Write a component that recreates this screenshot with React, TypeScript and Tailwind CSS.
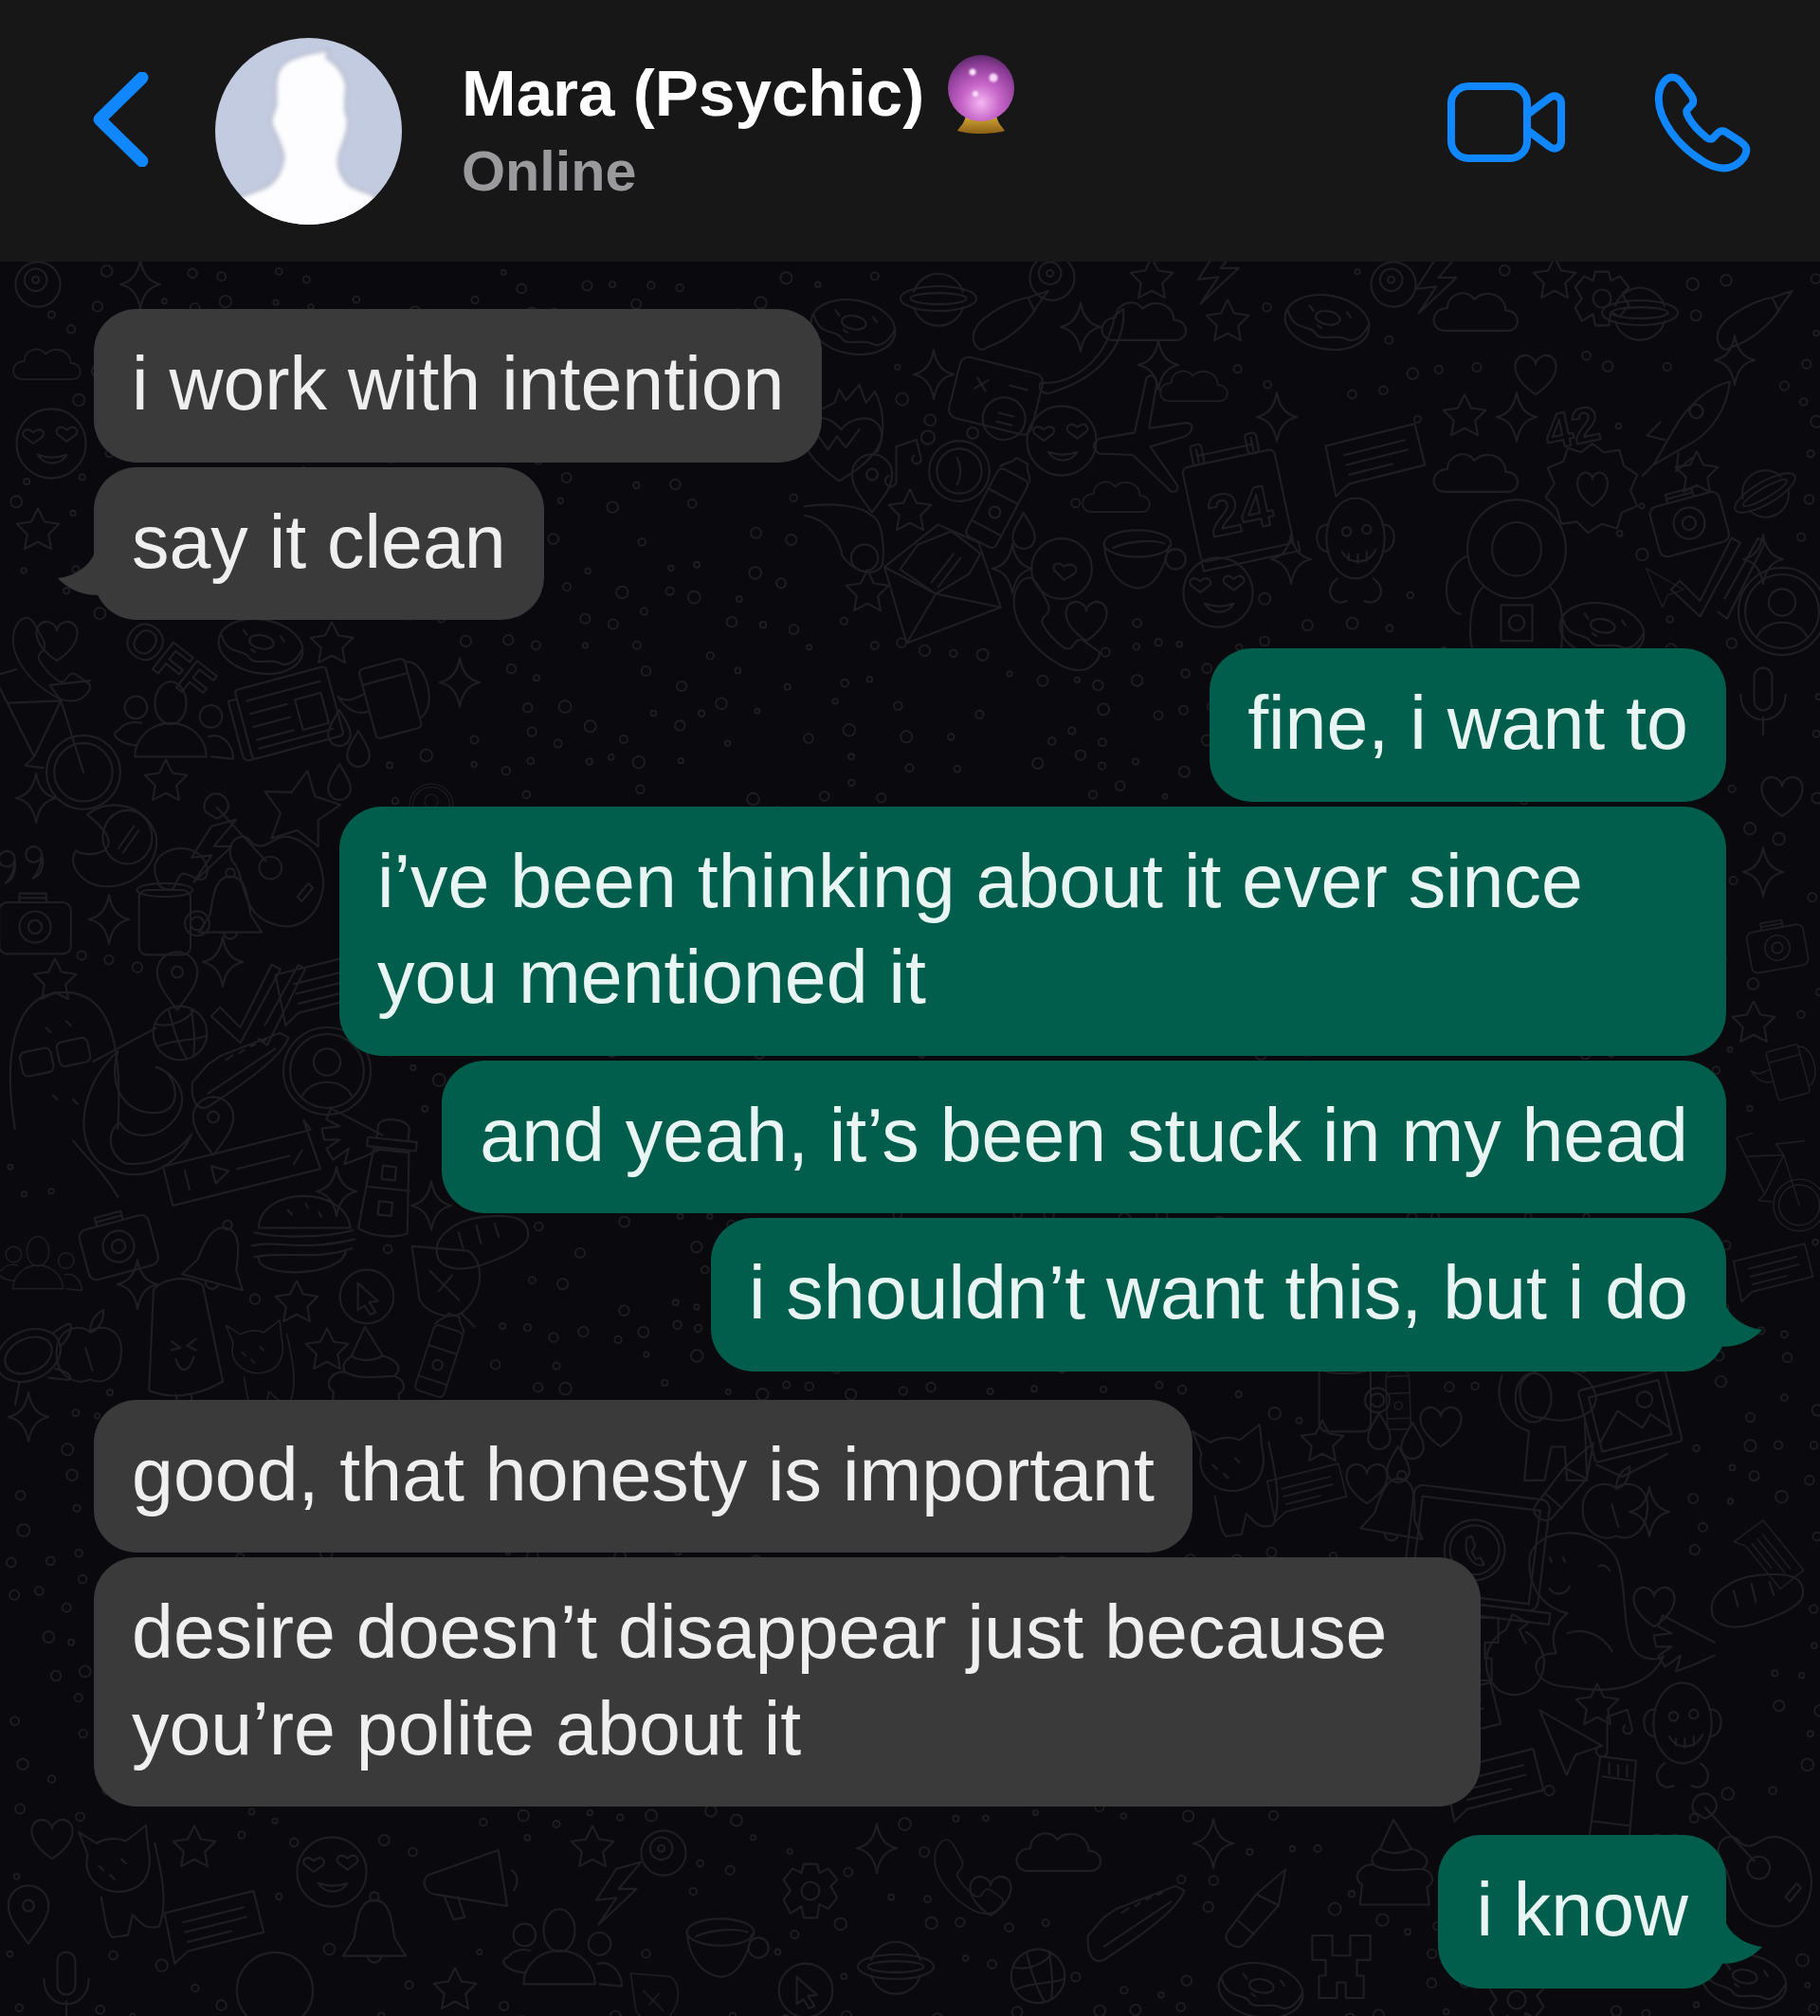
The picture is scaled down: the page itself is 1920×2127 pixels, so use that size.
import React from 'react';

const Star = (r = 20) => {
  const pts: string[] = [];
  for (let i = 0; i < 10; i++) {
    const a = (Math.PI / 5) * i - Math.PI / 2;
    const d = i % 2 ? r * 0.5 : r;
    pts.push(`${(Math.cos(a) * d).toFixed(1)},${(Math.sin(a) * d).toFixed(1)}`);
  }
  return <polygon points={pts.join(' ')} />;
};

const handset =
  'M-22-36C-30-36-36-26-36-14-36 6-18 28 2 40 14 48 26 48 32 44 38 40 42 34 40 30L26 20C22 18 20 20 16 26 14 28 10 28 8 26 0 20-6 14-10 6-12 2-10 0-6-4-4-8-4-10-6-14L-16-32C-18-34-20-36-22-36Z';

const eyes = (
  <>
    <path d="M-16-10c-6-6-12 0-8 4l8 6 8-6c4-4-2-10-8-4ZM14-12c-6-6-12 0-8 4l8 6 8-6c4-4-2-10-8-4Z" />
    <path d="M-12 10c6 10 20 10 26 0-8 3-18 3-26 0Z" />
  </>
);

const doodles: Record<string, React.ReactNode> = {
  star: Star(20),
  bigstar: Star(36),
  sparkle: <path d="M0-22Q3-3 18 0 3 3 0 22-3 3-18 0-3-3 0-22Z" />,
  heart: <path d="M0 18C-26 0-20-18-8-17-3-16 0-12 0-9 0-12 3-16 8-17 20-18 26 0 0 18Z" />,
  drop: <path d="M0-16C6-6 10 0 10 6A10 10 0 0 1-10 6C-10 0-6-6 0-16Z" />,
  cloud: <path d="M-30 16C-44 16-44-4-28-4-28-18-10-22-4-12 6-22 24-16 24-2 38-2 38 16 26 16Z" />,
  planet: (
    <>
      <path d="M-22-6A23 23 0 0 1 22-6M22 8A23 23 0 0 1-22 8" />
      <ellipse rx="34" ry="11" />
      <ellipse rx="25" ry="5" />
    </>
  ),
  phone: <path d={handset} />,
  bike: (
    <>
      <circle cx="22" cy="38" r="33" />
      <circle cx="22" cy="38" r="26" />
      <path d="M22 38 2-26-46-24-22 24 2-26M2-26-8-40 28-44M-46-24-58-48-38-54M-22 24-30 32-14 34" />
    </>
  ),
  people: (
    <>
      <ellipse cy="-24" rx="14" ry="19" />
      <path d="M-32 24A32 30 0 0 1 32 24Z" />
      <circle cx="-31" cy="-20" r="10" />
      <circle cx="36" cy="-12" r="10" />
      <path d="M-30 14C-50 12-54 2-46 0-42-6-34-8-26-6M34 6C46 2 56 14 56 26L36 24" />
    </>
  ),
  newspaper: (
    <g transform="rotate(-15)">
      <rect x="-42" y="-32" width="84" height="64" rx="3" />
      <path d="M-42-24H-50V26C-50 32-46 32-42 32M-34-20H34M-34-8H0M-34 4H0M-34 16H0M-34 24H34" />
      <rect x="8" y="-10" width="24" height="28" />
    </g>
  ),
  pot: (
    <g transform="rotate(-15)">
      <rect x="-20" y="-30" width="42" height="64" rx="4" />
      <path d="M-20-16H22M22-26C40-26 42 20 22 26M-20-8C-30-6-38-4-44-12-40 0-32 10-20 8" />
    </g>
  ),
  mug: (
    <>
      <rect x="-24" y="-28" width="46" height="58" rx="7" />
      <ellipse cx="-1" cy="-28" rx="25" ry="6" />
      <circle cx="28" cy="2" r="11" />
      <circle cx="28" cy="2" r="6" />
    </>
  ),
  guitar: (
    <>
      <path d="M-52-62-8-14M-62-58C-68-72-48-82-42-66-40-60-46-54-52-52Z" />
      <path d="M-20-30C-30-44-46-30-38-14-30-6-30 10-24 22-16 42 10 50 26 40 40 30 48 10 40-12 36-28 14-40 2-34-6-30-12-24-20-30Z" />
      <circle cx="-4" cy="-8" r="10" />
      <path d="M20 18 30 6 34 10 24 22Z" />
    </>
  ),
  bell: (
    <>
      <path d="M0-30C-14-30-16-10-18 4L-28 20H28L18 4C16-10 14-30 0-30Z" />
      <path d="M-6 20A6 6 0 0 0 6 20" />
      <circle cy="-33" r="4" />
    </>
  ),
  camera: (
    <>
      <rect x="-32" y="-22" width="64" height="46" rx="7" />
      <path d="M-14-22V-30H10V-22M-14-26H10" />
      <circle r="14" />
      <circle r="6" />
    </>
  ),
  pin: (
    <>
      <path d="M0 26C-12 10-18 2-18-8A18 18 0 0 1 18-8C18 2 12 10 0 26Z" />
      <circle cy="-8" r="5" />
    </>
  ),
  checks: <path d="M-40 6-14 30 22-36 14-40-14 16-32-2ZM2 26 10 32 44-36 38-40 8 14" />,
  ball: (
    <>
      <circle r="24" />
      <path d="M-22-8C-6-4 8-14 12-20M-20 12C-4 4 12 8 24 2M-10-20C-6-4-2 10 6 23M10-22C12-6 14 6 12 20" />
    </>
  ),
  sneaker: <path d="M-44 10-30-6-18-14 34-34 42-30C36-14 10 6-30 32-40 36-46 26-44 10ZM-30 20 30-20M-14-10-8-14M-2-16 2-19M8-22 12-24M18-26 22-28" />,
  usercircle: (
    <>
      <circle r="39" />
      <circle r="33" />
      <circle cy="-8" r="12" />
      <path d="M-22 22C-14 6 14 6 22 22" />
    </>
  ),
  coffee: (
    <>
      <path d="M-30-14C-28 10-16 24 0 26 14 26 24 10 28-12" />
      <ellipse cy="-14" rx="30" ry="12" />
      <path d="M-22-10C-10-16 14-18 24-14" />
      <circle cx="34" cy="0" r="9" />
    </>
  ),
  calendar: (
    <g transform="rotate(-12)">
      <rect x="-42" y="-40" width="84" height="86" rx="5" />
      <path d="M-42 46V54H46V46M-26-42V-54M24-42V-54M-26-48H24" />
      <rect x="-31" y="-58" width="10" height="18" rx="3" />
      <rect x="19" y="-58" width="10" height="18" rx="3" />
      <text x="-28" y="26" fontSize="52" fontFamily="Liberation Sans, sans-serif" fontWeight="700">24</text>
    </g>
  ),
  smiley: (
    <>
      <circle r="31" />
      {eyes}
    </>
  ),
  halfsmile: (
    <>
      <circle r="27" />
      <path d="M2-2c-6-6-12 0-8 4l8 8 10-6c4-6-4-10-10-6Z" />
    </>
  ),
  plane: <path d="M-6-56C-2-62 4-58 4-50V-12L34-22C44-26 44-14 36-10L8 4 38 34C40 40 34 42 30 38L-6 14-36 18C-44 14-44 8-36 4L-8-6Z" />,
  envelope: (
    <>
      <path d="M-50-10-2-48 34-32 54 26-30 58Z" />
      <path d="M-50-10-4 14 54 26M-4 14-30 58M-36-8-20-30 10-42 36-22 26-4-4 14Z" />
      <path d="M-8 4 12-22M-2 8 18-18" />
    </>
  ),
  bottle: (
    <g transform="rotate(28)">
      <rect x="-15" y="-28" width="30" height="68" rx="5" />
      <path d="M-15-28C-12-36-6-36-6-42H6C6-36 12-36 15-28M-15 26H15M-15-6H15" />
      <circle cy="10" r="5" />
    </g>
  ),
  donut: (
    <g transform="rotate(10)">
      <ellipse rx="38" ry="24" />
      <ellipse cy="-4" rx="11" ry="6" />
      <path d="M-36-4C-28 14-14 4-8 12-2 18 12 8 20 12 28 14 34 6 37-4M-18-12-14-8M16-12 20-8M-8 4-4 6" />
    </g>
  ),
  banana: <path d="M34-50C36-26 22 8-28 24-36 28-44 22-40 16-10 18 20-6 26-44Z" />,
  chat: (
    <g transform="rotate(-14)">
      <path d="M-40-20H42V18H-28L-42 26Z" />
      <path d="M-26-8H30M-26 1H30M-26 10H14" />
    </g>
  ),
  audio: (
    <g transform="rotate(-14)">
      <path d="M-68-18H68L64-28 68 18H-68Z" />
      <path d="M-50-10V8M-26-8-12 0-26 8ZM-4 0H44M46 8 56-2" />
    </g>
  ),
  burger: (
    <>
      <path d="M-40-8C-38-46 38-46 42-8Z" />
      <path d="M-44-4C-20 2 24 0 44-6M-46 8C-24 2-4 14 46 2M-44 18C-14 12 10 22 44 10M-40 18C-42 38 36 36 38 12M-14-24-10-20M2-30 4-26M14-22 16-18" />
    </>
  ),
  cat: (
    <>
      <path d="M-44-44-36-24C-42-2-20 14 0 8 18 4 22-14 18-30L16-50-2-36C-10-40-22-38-28-34Z" />
      <path d="M-24 14C-20 34-20 44-14 50L0 48 4 30C12 36 14 44 28 40 36 20 30-8 24-34" />
      <path d="M-26-14-22-10M-6-20-2-16M-16-6-12-2" />
    </>
  ),
  dog: (
    <>
      <path d="M-30-50C-40-20-20-4-6 0L-10 44H8L14 14 26 14 28 44H46L44-8" />
      <path d="M-14-36C-14-64 50-64 54-30 54-12 26-6 6-12-10-12-14-22-14-36Z" />
      <ellipse cx="-2" cy="-30" rx="16" ry="22" />
    </>
  ),
  laptop: (
    <g transform="rotate(7)">
      <rect x="-60" y="-56" width="122" height="100" rx="8" />
      <rect x="-52" y="-46" width="106" height="84" />
      <path d="M-70 44H74V54H-66ZM-24 44H28" />
      <circle cy="-4" r="22" />
      <circle cy="-4" r="27" />
      <path d="M-8-14C-10 2 2 12 10 8L6 2 2 4-2-2 0-8-4-16Z" />
    </g>
  ),
  dino: (
    <path d="M-48-40C-48-70 8-76 28-46 40-26 34 14 44 36 52 50 70 48 72 44 60 74 20 78-10 72-50 72-50 40-24 42-30 26-24 14-14 6-30 2-48-10-48-40ZM-30-16C-24-8-14-12-12-18M14-36C18-38 22-36 24-32M-14 24C2 18 18 26 26 40M-30-44-28-40M-18-44-16-40" />
  ),
  image: (
    <g transform="rotate(-14)">
      <rect x="-40" y="-34" width="80" height="66" rx="3" />
      <rect x="-32" y="-26" width="64" height="50" />
      <path d="M-32 16-10-8 8 12 18 2 32 18" />
      <circle cx="16" cy="-12" r="7" />
      <path d="M-40 34-20 50 24 40" />
    </g>
  ),
  pencil: <path d="M-30 20-4-14 22-36 16-4-16 32C-24 36-34 28-30 20ZM-20 10-6 22M-4-14 16-4" />,
  bolt: <path d="M-4-24 18-30-2-6 14-6-20 26-4 2-22 4Z" />,
  comet: <path d="M-28 22C-36 30-46 16-38 4-30-8-6-20 8-22L26-28 16-14C6 4-14 18-28 22ZM8-22 14-10" />,
  moon: (
    <>
      <circle r="20" />
      <circle cx="-2" cy="-4" r="10" />
      <circle cx="-2" cy="-4" r="3" />
    </>
  ),
  clock: (
    <>
      <circle r="27" />
      <circle r="20" />
      <path d="M-2-12C2-4 2 4-2 12" />
      <circle cx="-28" cy="-30" r="6" />
      <circle cx="12" cy="-34" r="5" />
    </>
  ),
  music: <path d="M-8 14V-16L10-22 14-6M-8 14A5 5 0 1 1-14 10M14-6A4 4 0 1 1 8-8" />,
  card: (
    <g transform="rotate(14)">
      <rect x="-38" y="-30" width="76" height="56" rx="8" />
      <circle cx="12" cy="16" r="19" />
      <path d="M6 12 20 12M6 20 20 20M-20-14-10-4M-20-4-10-14M10-14H26" />
    </g>
  ),
  heartw: (
    <>
      <path d="M-4 36C-44 8-44-18-24-20-14-22-8-16-2-10 6-22 32-26 34-6 34 10 16 24-4 36Z" />
      <path d="M-24-6-14 8-6-4 2 6 14-10M-28-24-8-34-4-46 2-36 14-50 20-34 28-44C38-24 36-2 30 10" />
    </>
  ),
  glasses: (
    <>
      <path d="M-48-26C-20-30 4-26 12-18 22-14 24 10 22 26 14 40-6 30-14 18-16 6-24-14-48-18" />
      <circle cx="6" cy="20" r="12" />
    </>
  ),
  monkey: (
    <>
      <ellipse cx="0" cy="-6" rx="26" ry="36" />
      <path d="M-24-18C-38-20-38 6-24 6M24-18C38-20 38 6 24 6M-16 30C-30 40-20 56-8 50M16 30C30 40 20 56 8 50" />
      <circle cx="-8" cy="-12" r="4" />
      <circle cx="10" cy="-14" r="4" />
      <path d="M-12 6C-6 18 12 18 18 4M-6 8V14M2 8V16M10 6V14" />
    </>
  ),
  astronaut: (
    <>
      <circle cy="-26" r="44" />
      <ellipse cx="0" cy="-26" rx="22" ry="24" />
      <path d="M-30 8C-44 20-42 54-40 62M30 8C42 20 42 40 40 62M-44-20C-70-8-66 30-50 32M-14 24H14L14 56H-14Z" />
      <circle cy="40" r="7" />
    </>
  ),
  flower: (
    <>
      <path d="M0-40 10-32 24-34 28-20 40-12 34 2 40 16 26 22 22 36 8 32-4 40-14 30-28 32-32 18-42 8-34-4-40-18-26-24-22-36-10-32Z" />
      <path d="M0 16C-20 2-14-14-6-14-2-14 0-10 0-8 0-10 2-14 6-14 14-14 20 2 0 16Z" />
    </>
  ),
  rocket: <path d="M-30 34-14 6C0-20 20-36 38-40 36-20 24 6-2 18ZM14-14A6 6 0 1 0 14-13ZM-20 12-36 8-24-4M-8 24-10 40 4 28M-30 34-40 44" />,
  text42: <text x="-26" y="16" fontSize="44" fontFamily="Liberation Sans, sans-serif" fontWeight="700" transform="rotate(-12)">42</text>,
  off: <text x="-36" y="14" fontSize="44" fontFamily="Liberation Sans, sans-serif" fontWeight="700" transform="rotate(38)">OFF</text>,
  apple: <path d="M0-12C-6-20-30-18-30 6-30 28-12 36 0 30 12 36 28 26 28 4 28-18 6-20 0-12ZM0-12C0-22 4-28 12-32 12-22 8-14 0-12ZM-4 2 2 22" />,
  popsicle: (
    <>
      <path d="M-32 44-28-46C-20-56 2-60 16-50L34 36C10 50-14 52-32 44ZM-8 48-4 66H6L6 48M-12 0-4 6-12 8M10-2 2 4 10 8M-8 16C-4 30 4 28 8 14" />
    </>
  ),
  cake: <path d="M0-34 16-8C30-4 34 4 26 10 38 14 36 24 30 26L32 42H-30L-28 24C-38 18-30 6-18 6-22-2-14-6-12-8ZM-12-8C-2-2 8-4 16-8M-18 6C-6 14 14 10 26 10" />,
  turtle: (
    <>
      <ellipse rx="30" ry="22" transform="rotate(-25)" />
      <ellipse rx="22" ry="15" transform="rotate(-25)" />
      <path d="M22-20C34-28 42-34 36-18 32-10 30-10 28-8M-8 24-12 44M24 12C34 14 40 18 36 22L18 20" />
    </>
  ),
  leaf: <path d="M-30-34 20-30C36-20 34 10 14 26-2 34-26 20-24 8ZM-14-12 12 14M-6 6 6-8M14 26 26 38" />,
  bread: <path d="M-36 14C-44-6-20-22 6-24 28-26 46-24 44-6 42 4 24 12 0 20-14 24-30 24-36 14ZM-18-10-14 4M-2-16 2 0M14-18 18-6" />,
  lighthouse: (
    <g transform="rotate(6)">
      <path d="M-22 50-16-22H16L22 50C10 56-10 56-22 50ZM-22-24H22V-32H-22ZM-14-32V-44C-10-52 10-52 14-44V-32M-19 12H20" />
      <rect x="-6" y="-8" width="12" height="12" />
      <rect x="-6" y="24" width="12" height="12" />
    </g>
  ),
  hand: <path d="M24-2-22-26-26-16-14-10-30-8-28 2-14 2-26 10-20 20-6 10-10 24 6 18 24 10" />,
  cursor: (
    <>
      <circle r="24" />
      <path d="M-8-12 10 4 2 5 8 14 3 16-2 8-8 12Z" />
    </>
  ),
  quotes: <path d="M-14-8A7 7 0 1 0-14-7C-14 4-18 10-22 14-16 12-12 4-14-8ZM10-12A7 7 0 1 0 10-11C10 0 6 6 2 10 8 8 14 0 10-12Z" />,
  mushroom: <path d="M-20 6C-30-14-10-26 8-22 22-18 28-4 22 4 14 8 8-2 2 0-4 2-2 14-10 14-16 14-20 10-20 6Z" />,
  cap: (
    <>
      <path d="M-28-30C-10-46 26-40 34-10 36 16 12 36-14 34-34 32-46 14-38 2-28 10 16 4-28-30Z" />
      <ellipse cx="8" cy="-10" rx="22" ry="24" />
      <path d="M0 0 14-20M4 4 18-16" />
    </>
  ),
  ghost: (
    <>
      <path d="M-46 60C-56 0-50-62-2-62 42-62 50-10 46 60" />
      <rect x="-40" y="-16" width="28" height="22" rx="5" transform="rotate(-12)" />
      <rect x="-6" y="-18" width="28" height="22" rx="5" transform="rotate(-12)" />
      <path d="M24 0 80-30M-18-30-14-26M0-36 4-32M-12 30-8 34M6 34 10 38" />
    </>
  ),
  dragon: <path d="M-20-60C-32-20-4 0 20-6 40-12 30-44 14-46 30-40 44-24 34-4 20 20-10 20-18 4-30 10-30 30-14 40 10 44 34 30 46 14 30 50-8 60-36 40-60 20-54-30-20-60ZM-60 20C-44 40-36 44-20 70" />,
  reload: <path d="M-8-30C-28-20-32 10-14 24 6 36 28 20 26-4 24-16 18-24 10-28M-8-30-2-44 12-36 4-30 10-18" />,
  castle: <path d="M-26-28H-8V-10H8V-28H26V-6H14V8H20V28H4V14H-4V28H-20V8H-14V-6H-26Z" />,
  megaphone: <path d="M-36-6 26-28 34 22-28 12C-40 12-44-2-36-6ZM-22 14-14 34-4 32-10 14M38-10C44-6 44 2 40 8" />,
  gear: (
    <>
      <path d="M-6-24H6L8-16 16-20 24-10 18-4 24 6 16 16 8 12 6 24H-6L-8 14-18 20-24 8-18 0-24-10-16-20-8-16Z" />
      <circle r="8" />
    </>
  ),
  triangle: <path d="M-26-26 30 6 6 14-2 32ZM-2 32 6 14" />,
  sdcard: <path d="M-22 44-10-44 22-40 14 50ZM-8-26 20-22M-2-38V-28M6-36V-26M14-36V-26M-16 14 16 18" />,
  mic: <path d="M-8-22A8 8 0 0 1 8-22V0A8 8 0 0 1-8 0ZM-20-6C-20 24 20 24 20-6M0 14V30" />,
  ring: <path d="M-34 0A34 34 0 0 1 34 0M-34 0A34 34 0 0 0 34 0" />,
};

const radius: Record<string, number> = {
  star: 22, sparkle: 22, heart: 22, drop: 18, cloud: 38, planet: 38, phone: 46, bike: 78, people: 62, newspaper: 62, pot: 52, mug: 42, guitar: 76,
  bell: 34, camera: 40, pin: 28, checks: 48, ball: 27, sneaker: 52, usercircle: 42, coffee: 40, calendar: 72, smiley: 34, halfsmile: 30, plane: 62,
  envelope: 62, bottle: 50, donut: 42, banana: 48, chat: 46, audio: 74, burger: 50, cat: 58, dog: 66, laptop: 84, dino: 84, image: 58, pencil: 42,
  bolt: 28, comet: 42, moon: 22, clock: 44, music: 24, card: 46, heartw: 50, glasses: 52, monkey: 62, astronaut: 86, flower: 44, rocket: 50, text42: 34,
  off: 50, apple: 38, popsicle: 66, cake: 46, turtle: 46, leaf: 40, bread: 46, lighthouse: 58, hand: 32, cursor: 26, quotes: 26, mushroom: 30, cap: 50,
  ghost: 80, dragon: 70, reload: 38, castle: 38, megaphone: 46, gear: 26, triangle: 36, sdcard: 50, mic: 32, ring: 36, bigstar: 38,
};

const GROW = 1.18;

// [doodle, x, y, rotation, scale] in page pixels
const placed: [string, number, number, number?, number?][] = [
  // left column
  ['smiley', 54, 468], ['sparkle', 148, 300], ['moon', 40, 300], ['cloud', 52, 385, 0, 0.8], ['star', 40, 560], ['heart', 60, 676],
  ['phone', 52, 690, 0, 0.9], ['off', 170, 692], ['donut', 275, 682], ['star', 350, 680], ['bike', 62, 770], ['people', 180, 770], ['newspaper', 305, 752],
  ['pot', 410, 735], ['sparkle', 485, 720], ['drop', 358, 768], ['drop', 378, 790], ['drop', 358, 825], ['usercircle', 455, 850, 0, 0.5], ['star', 175, 825],
  ['bigstar', 317, 855, 10], ['guitar', 290, 925], ['cap', 125, 895], ['quotes', 32, 915], ['bolt', 228, 900], ['mushroom', 190, 922], ['sparkle', 38, 842],
  ['camera', 37, 978], ['mug', 175, 972], ['bell', 243, 960], ['sparkle', 115, 970], ['sparkle', 235, 1015], ['star', 58, 1035], ['pin', 187, 1035],
  ['checks', 270, 1065], ['chat', 342, 1040], ['ball', 190, 1090], ['sneaker', 255, 1130], ['usercircle', 345, 1130], ['ghost', 70, 1120],
  ['pin', 225, 1188], ['audio', 255, 1232], ['lighthouse', 410, 1240], ['hand', 375, 1200], ['burger', 320, 1305], ['camera', 125, 1315, -15], ['people', 40, 1340, 0, 0.7],
  ['bell', 230, 1330, 15], ['sparkle', 145, 1355], ['sparkle', 355, 1257], ['sparkle', 455, 1272], ['bread', 505, 1312], ['cursor', 387, 1368], ['leaf', 470, 1355],
  ['popsicle', 195, 1415], ['star', 313, 1375], ['apple', 95, 1420], ['turtle', 30, 1430], ['cat', 280, 1440, 0, 0.8], ['cake', 385, 1440], ['star', 345, 1425], ['bottle', 465, 1430, -10, 0.9],
  ['dragon', 148, 1180],
  // above the first green bubble
  ['planet', 990, 315], ['moon', 1110, 293], ['donut', 900, 345], ['comet', 1075, 340], ['sparkle', 1140, 345], ['star', 1215, 295], ['cloud', 1210, 340], ['star', 1295, 340],
  ['bolt', 1290, 290], ['heartw', 890, 465], ['sparkle', 985, 395], ['card', 1050, 420], ['banana', 1145, 385], ['smiley', 1120, 465], ['plane', 1205, 465, 10], ['cloud', 1262, 408, 0, 0.8],
  ['sparkle', 1222, 385], ['sparkle', 1347, 440], ['pin', 920, 510], ['music', 955, 490], ['clock', 1012, 497], ['star', 960, 540], ['glasses', 905, 565], ['bottle', 1055, 530],
  ['envelope', 992, 610], ['sparkle', 1068, 600], ['cloud', 1180, 525, 0, 0.8], ['coffee', 1200, 590], ['calendar', 1305, 530], ['halfsmile', 1120, 600], ['smiley', 1285, 625],
  ['phone', 1112, 652], ['heart', 1146, 655], ['star', 915, 625], ['drop', 1080, 560], ['chat', 1450, 482], ['monkey', 1430, 575], ['astronaut', 1600, 610],
  ['sparkle', 1362, 590], ['text42', 1660, 450], ['rocket', 1780, 450], ['planet', 1862, 520, -30, 0.9], ['camera', 1782, 552, -15], ['flower', 1680, 515], ['cloud', 1560, 500], ['sparkle', 1860, 590],
  ['checks', 1810, 615], ['triangle', 1755, 618, 0, 0.6], ['usercircle', 1880, 645], ['donut', 1690, 665], ['star', 1790, 500], ['star', 1545, 440], ['sparkle', 1600, 440], ['cloud', 1560, 330], ['planet', 1730, 330],
  ['gear', 1690, 315], ['star', 1640, 295], ['moon', 1470, 300], ['donut', 1400, 340], ['comet', 1860, 340], ['bolt', 1520, 300], ['heart', 1620, 395], ['sparkle', 1830, 380],
  // right edge
  ['mic', 1860, 740], ['heart', 1880, 840], ['sparkle', 1860, 920], ['camera', 1875, 1000, -10, 0.8], ['star', 1850, 1080], ['pot', 1885, 1130, 0, 0.7], ['bike', 1880, 1240, 0, 0.7], ['chat', 1870, 1340, 0, 0.8],
  // lower right
  ['cat', 1310, 1562], ['chat', 1378, 1572, 0, 0.8], ['heart', 1442, 1565], ['star', 1395, 1522], ['bell', 1472, 1595, 10], ['drop', 1455, 1510], ['drop', 1490, 1520], ['drop', 1475, 1545], ['heart', 1520, 1505],
  ['mug', 1420, 1475], ['bottle', 1475, 1475, -30, 0.7], ['dog', 1620, 1510], ['image', 1720, 1495], ['laptop', 1555, 1640], ['pencil', 1655, 1565], ['apple', 1705, 1585], ['sparkle', 1740, 1595],
  ['dino', 1670, 1695], ['chat', 1868, 1640, 65, 0.7], ['heart', 1745, 1695], ['hand', 1780, 1735], ['star', 1513, 1745], ['castle', 1550, 1740], ['reload', 1598, 1755], ['chat', 1530, 1810], ['star', 1685, 1800],
  ['triangle', 1655, 1835], ['music', 1705, 1830], ['monkey', 1775, 1825], ['chat', 1575, 1880], ['sdcard', 1700, 1905], ['cloud', 1760, 1950, 0, 0.7], ['bread', 1850, 1690], ['guitar', 1860, 1980],
  ['cake', 1470, 1960], ['star', 1600, 2000], ['planet', 1720, 2040], ['gear', 1600, 2110], ['donut', 1840, 2090],
  // bottom band
  ['sparkle', 30, 1495], ['heart', 55, 1940], ['cat', 135, 1985], ['pin', 30, 2020], ['star', 205, 1950], ['chat', 225, 2030], ['smiley', 350, 1975], ['megaphone', 495, 1985], ['bell', 395, 2040],
  ['gear', 855, 1995], ['moon', 700, 1955], ['star', 625, 1950], ['planet', 945, 2075], ['cloud', 1120, 1955], ['heart', 1045, 2000], ['sneaker', 1200, 2030], ['people', 590, 2065], ['coffee', 760, 2055], ['ball', 1095, 2085],
  ['pencil', 1330, 2015], ['sparkle', 1280, 1945], ['castle', 1415, 2075], ['mic', 70, 2095], ['ring', 290, 2100], ['cursor', 850, 2100], ['star', 480, 2100], ['bolt', 655, 2000], ['sparkle', 925, 1950],
  ['phone', 1020, 1975, 0, 0.8], ['donut', 1330, 2100], ['leaf', 690, 2110, 0, 0.7],
];

// little circles that fill the gaps between the doodles
const fillers = (() => {
  let seed = 20240;
  const rnd = () => {
    seed = (seed * 1664525 + 1013904223) % 4294967296;
    return seed / 4294967296;
  };
  const out: { x: number; y: number; r: number }[] = [];
  for (let gx = 10; gx < 1920; gx += 30) {
    for (let gy = 285; gy < 2127; gy += 30) {
      const x = gx + rnd() * 20;
      const y = gy + rnd() * 20;
      const r = 2.5 + rnd() * 4;
      const hit = placed.some(([n, px, py, , s]) => Math.hypot(px - x, py - y) < radius[n] * (s ?? 1) * GROW * 0.9 + r + 5);
      if (hit || rnd() < 0.4) continue;
      if (out.some((c) => Math.hypot(c.x - x, c.y - y) < c.r + r + 14)) continue;
      out.push({ x, y, r });
    }
  }
  return out;
})();

function Wallpaper() {
  return (
    <svg className="absolute inset-0 h-full w-full" viewBox="0 0 1920 1851" fill="none" stroke="#1f1f23" strokeWidth="1.8" strokeLinejoin="round" strokeLinecap="round">
      <g transform="translate(0 -276)">
        {fillers.map((c, i) => (
          <circle key={i} cx={c.x} cy={c.y} r={c.r} />
        ))}
        {placed.map(([name, x, y, rot, s], i) => (
          <g key={i} transform={`translate(${x} ${y}) rotate(${rot ?? 0}) scale(${(s ?? 1) * GROW})`}>
            {doodles[name]}
          </g>
        ))}
      </g>
    </svg>
  );
}

function Tail({ side, color }: { side: 'left' | 'right'; color: string }) {
  return (
    <svg
      className={side === 'left' ? 'absolute bottom-[19px] left-[-38px]' : 'absolute right-[-38px] bottom-[19px] -scale-x-100'}
      width="60"
      height="50"
      viewBox="0 0 60 50"
    >
      <path d="M38 0C32 14 16 23 0 25 12 38 30 45 48 42L60 20Z" fill={color} />
    </svg>
  );
}

function Bubble({ text, mine, tail, gap, wide }: { text: React.ReactNode; mine?: boolean; tail?: boolean; gap?: boolean; wide?: boolean }) {
  const color = mine ? '#015e4d' : '#3a3a3b';
  return (
    <div
      className={`relative rounded-[45px] px-10 pt-[29px] pb-[31px] text-[78.9px] leading-[101.5px] whitespace-nowrap ${mine ? 'self-end bg-[#015e4d] text-[#e9f5f3]' : 'self-start bg-[#3a3a3b] text-[#efefef]'} ${gap ? 'mt-[30px]' : 'mt-[5px]'} ${wide ? 'w-[1463px]' : ''}`}
    >
      {text}
      {tail && <Tail side={mine ? 'right' : 'left'} color={color} />}
    </div>
  );
}

function CrystalBall() {
  return (
    <svg width="80" height="86" viewBox="0 0 80 86" className="ml-[20px]">
      <defs>
        <radialGradient id="orb" cx="0.5" cy="0.72" r="0.72">
          <stop offset="0" stopColor="#f3b6ef" />
          <stop offset="0.4" stopColor="#c765c9" />
          <stop offset="0.8" stopColor="#8d3d97" />
          <stop offset="1" stopColor="#5d2a6b" />
        </radialGradient>
        <linearGradient id="foot" x1="0" x2="0" y1="0" y2="1">
          <stop offset="0" stopColor="#e0b43c" />
          <stop offset="1" stopColor="#8a5f14" />
        </linearGradient>
      </defs>
      <path d="M24 62C24 72 18 76 15 81 28 85 52 85 65 81 62 76 56 72 56 62Z" fill="url(#foot)" />
      <circle cx="40" cy="36" r="35" fill="url(#orb)" />
      <circle className="blur-[1px]" cx="31" cy="19" r="3.5" fill="#fbe3fb" />
      <circle className="blur-[1px]" cx="53" cy="25" r="4.5" fill="#f9d5f9" />
      <circle className="blur-[1px]" cx="34" cy="42" r="3" fill="#fbe3fb" />
    </svg>
  );
}

function Avatar() {
  return (
    <svg width="197" height="197" viewBox="443 27 590 590" className="ml-[68px] shrink-0">
      <defs>
        <clipPath id="avatar-clip">
          <circle cx="738" cy="322" r="295" />
        </clipPath>
      </defs>
      <circle cx="738" cy="322" r="295" fill="#c3cbe1" />
      <g clipPath="url(#avatar-clip)">
        <path
          className="blur-[6px]"
          d="M800 65C740 78 680 85 650 120 628 145 636 210 635 240 630 265 612 280 625 310 640 340 652 370 660 400 655 440 640 480 600 500L520 530V640H960L945 525 870 495C840 470 825 430 835 395 845 360 868 320 862 280 850 260 855 220 858 180 850 130 820 105 795 90Z"
          fill="#fdfdff"
          stroke="#b9bdcb"
          strokeWidth="8"
        />
      </g>
    </svg>
  );
}

export default function App() {
  return (
    <div className="min-h-[2127px] bg-[#0a0a0e] font-['Liberation_Sans',Arial,sans-serif]">
      <header className="flex h-[276px] items-center bg-[#171717] pr-[72px] pl-[97px]">
        <svg width="62" height="100" viewBox="0 0 62 100" className="mb-6 shrink-0">
          <path d="M53 6 8 50 53 94" fill="none" stroke="#1087ff" strokeWidth="13" strokeLinecap="round" strokeLinejoin="round" />
        </svg>
        <Avatar />
        <div className="ml-[63px]">
          <div className="flex h-20 items-center text-[69.2px] leading-20 font-bold text-white">
            <span className="mb-[3px]">Mara (Psychic)</span>
            <CrystalBall />
          </div>
          <div className="mt-[5px] text-[59.3px] leading-[72px] font-bold text-[#9a9a9c]">Online</div>
        </div>
        <div className="mb-[18px] ml-auto flex items-center gap-[93px]">
          <svg width="124" height="84" viewBox="0 0 124 84" fill="none" stroke="#1087ff" strokeWidth="8">
            <rect x="4" y="4" width="80" height="76" rx="18" />
            <path d="M84 34 108 16C114 12 120 16 120 22V62C120 68 114 72 108 68L84 50" strokeLinejoin="round" />
          </svg>
          <svg width="104" height="107" viewBox="880 105 315 325" fill="none" stroke="#1087ff" strokeWidth="24" strokeLinejoin="round">
            <path d="M945 122C920 118 898 150 897 190 897 260 960 340 1030 385 1070 412 1110 420 1140 405 1165 392 1180 370 1178 350 1175 338 1165 332 1155 325L1110 296C1098 290 1090 296 1082 305L1070 318C1062 322 1052 318 1045 310 1020 290 1005 275 990 245 985 235 985 228 992 222L1005 208C1012 198 1008 190 1002 180L970 138C962 128 955 123 945 122Z" />
          </svg>
        </div>
      </header>

      <main className="relative flex h-[1851px] flex-col px-[99px] pt-[45px]">
        <Wallpaper />
        <Bubble text="i work with intention" />
        <Bubble text="say it clean" tail />
        <Bubble text="fine, i want to" mine gap />
        <Bubble text={<>i’ve been thinking about it ever since<br />you mentioned it</>} mine wide />
        <Bubble text="and yeah, it’s been stuck in my head" mine />
        <Bubble text="i shouldn’t want this, but i do" mine tail />
        <Bubble text="good, that honesty is important" gap />
        <Bubble text={<>desire doesn’t disappear just because<br />you’re polite about it</>} wide />
        <Bubble text="i know" mine tail gap />
      </main>
    </div>
  );
}
